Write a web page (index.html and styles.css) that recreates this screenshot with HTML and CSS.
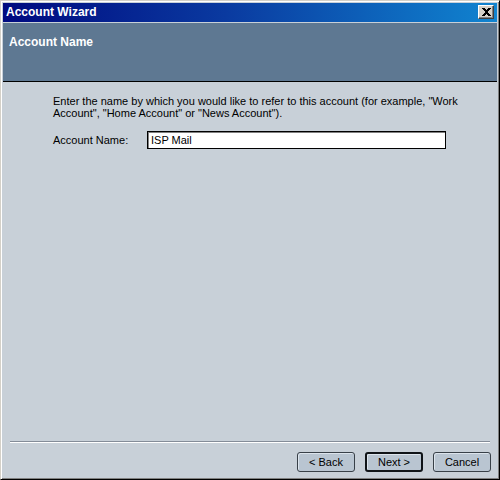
FILE: index.html
```html
<!DOCTYPE html>
<html>
<head>
<meta charset="utf-8">
<link rel="stylesheet" href="styles.css">
</head>
<body>
<div class="window">
  <div class="titlebar">
    <span class="title">Account Wizard</span>
    <button class="close" aria-label="Close">
      <svg width="9" height="8" viewBox="0 0 9 8"><path d="M0 0h3v1h1v1h1V1h1V0h3v1H8v1H7v1H6v2h1v1h1v1h1v1H6V7H5V6H4v1H3v1H0V7h1V6h1V5h1V3H2V2H1V1H0z" fill="#000"/></svg>
    </button>
  </div>
  <div class="header">Account Name</div>
  <div class="content">
    <p class="intro">Enter the name by which you would like to refer to this account (for example, "Work Account", "Home Account" or "News Account").</p>
    <div class="field">
      <label class="label">Account Name:</label>
      <div class="input">ISP Mail</div>
    </div>
  </div>
  <div class="footer">
    <div class="separator"></div>
    <div class="buttons">
      <button class="btn">&lt; Back</button>
      <button class="btn default">Next &gt;</button>
      <button class="btn">Cancel</button>
    </div>
  </div>
</div>
</body>
</html>
```
FILE: styles.css
```css
html, body {
  margin: 0;
  padding: 0;
  background: #c8d0d8;
}
.window {
  width: 500px;
  height: 480px;
  box-sizing: border-box;
  border: 1px solid;
  border-color: #d4d0c8 #000000 #000000 #d4d0c8;
  box-shadow: inset 1px 1px #ffffff, inset -1px -1px #808080;
  padding: 2px;
  background: #c8d0d8;
  display: flex;
  flex-direction: column;
  font-family: "Liberation Sans", Arial, sans-serif;
  font-size: 11px;
  color: #000;
}
.titlebar {
  height: 19px;
  background: linear-gradient(to right, #000a80 0%, #0a3aa0 45%, #1084d0 100%);
  display: flex;
  align-items: flex-start;
  justify-content: space-between;
  padding: 0 3px 0 3px;
}
.title {
  color: #fff;
  font-weight: bold;
  font-size: 12px;
  line-height: 19px;
}
.close {
  margin-top: 2px;
  width: 16px;
  height: 14px;
  padding: 0;
  background: #d4d0c8;
  border: 1px solid;
  border-color: #ffffff #404040 #404040 #ffffff;
  box-shadow: inset -1px -1px #808080;
  display: flex;
  align-items: center;
  justify-content: center;
}
.header {
  margin-top: 1px;
  height: 59px;
  box-sizing: border-box;
  background: #5e7892;
  border-bottom: 1px solid #000;
  color: #fff;
  font-weight: bold;
  font-size: 12px;
  line-height: 14px;
  padding: 12px 6px 0;
}
.content {
  flex: 1;
  padding: 13px 30px 0 50px;
}
.intro {
  margin: 0;
  line-height: 12px;
  width: 412px;
}
.field {
  margin-top: 12px;
  display: flex;
  align-items: center;
}
.label {
  width: 94px;
}
.input {
  width: 299px;
  height: 18px;
  box-sizing: border-box;
  background: #fff;
  border: 1px solid #000;
  box-shadow: inset 1px 1px #808080;
  padding: 0 3px;
  line-height: 16px;
}
.footer {
  padding: 0 7px 5px;
}
.separator {
  height: 1px;
  background: #848c98;
  border-bottom: 1px solid #ffffff;
}
.buttons {
  margin-top: 9px;
  display: flex;
  justify-content: flex-end;
  gap: 10px;
  margin-right: -1px;
}
.btn {
  width: 58px;
  height: 20px;
  padding: 0;
  background: #b9c5d1;
  border: 1px solid #384048;
  border-radius: 3px;
  box-shadow: inset 1px 1px #dce4ec;
  font-family: "Liberation Sans", Arial, sans-serif;
  font-size: 11px;
  color: #000;
}
.btn.default {
  border: 2px solid #101418;
}
```
